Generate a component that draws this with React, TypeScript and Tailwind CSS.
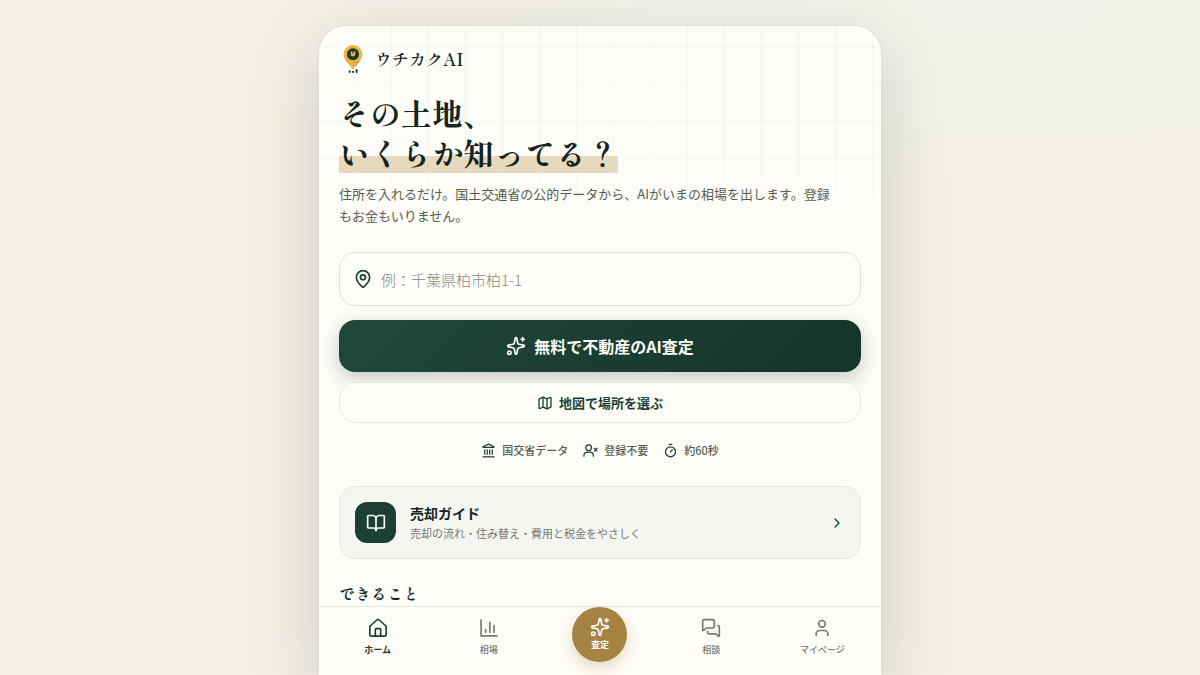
import { BookOpen, ChevronRight, Landmark, Map, MapPin, MessagesSquare, Sparkles, Timer, User } from 'lucide-react'
import type { ReactNode } from 'react'
import clsx from 'clsx'

const SERIF = "font-['Shippori_Mincho','Noto_Serif_CJK_JP','Noto_Serif_JP','Liberation_Serif','Noto_Sans_CJK_JP',serif]"

function Logo() {
  return (
    <svg viewBox="0 0 28 28" className="size-7 rounded-lg bg-white" aria-hidden="true">
      <path d="M14 24.8C12 20.8 4.6 15.6 4.6 9.2a9.4 9.2 0 0 1 18.8 0C23.4 15.6 16 20.8 14 24.8Z" fill="#efb33f" />
      <circle cx="14" cy="9.2" r="6" fill="#173b30" />
      <path d="M12.4 6.6v2.6a1.6 1.6 0 0 0 3.2 0V6.6" fill="#efb33f" stroke="#efb33f" strokeWidth="1.4" />
      <path d="M14 6v2.4" stroke="#173b30" strokeWidth="1.2" />
      <path d="M15 17.2h1M18 17.5h1M16.5 20h1" stroke="#7a6a34" />
      <path d="M10.7 25.6v2.2M14 26v1.8M17.6 24.2v3.6" stroke="#12261f" strokeWidth="1.8" />
    </svg>
  )
}

function StrokeIcon({ children }: { children: ReactNode }) {
  return (
    <svg viewBox="0 0 24 24" fill="none" stroke="currentColor" strokeWidth="2" strokeLinecap="round" strokeLinejoin="round" className="size-5" aria-hidden="true">
      {children}
    </svg>
  )
}

function UserXIcon() {
  return (
    <StrokeIcon>
      <circle cx="9" cy="7.5" r="4.5" />
      <path d="M1.5 21v-1.5a5 5 0 0 1 5-5h5a5 5 0 0 1 5 5V21M18 8.5l4.5 4.5M22.5 8.5 18 13" />
    </StrokeIcon>
  )
}

function BarsIcon() {
  return (
    <StrokeIcon>
      <path d="M2.5 2.5v19h19M8 17v-3M13 17V5.5M18 17V9" />
    </StrokeIcon>
  )
}

function HouseIcon() {
  return (
    <StrokeIcon>
      <path d="M2.2 10.8a2 2 0 0 1 .7-1.5l7.7-6.9a2 2 0 0 1 2.8 0l7.7 6.9a2 2 0 0 1 .7 1.5V20a1.8 1.8 0 0 1-1.8 1.8H4A1.8 1.8 0 0 1 2.2 20Z" />
      <path d="M8.8 21.5v-7.7a1 1 0 0 1 1-1h4.4a1 1 0 0 1 1 1v7.7" />
    </StrokeIcon>
  )
}

const TRUST = [
  { icon: <Landmark />, label: '国交省データ' },
  { icon: <UserXIcon />, label: '登録不要' },
  { icon: <Timer />, label: '約60秒' },
]

function NavItem({ label, icon, active }: { label: string; icon: ReactNode; active?: boolean }) {
  return (
    <a
      href="#"
      aria-current={active ? 'page' : undefined}
      className={clsx(
        'flex flex-col items-center gap-[3px] pt-[11px] text-[9px] leading-[18px]',
        active ? 'font-bold text-[#1c4033]' : 'font-medium text-[#75796f]',
      )}
    >
      {icon}
      {label}
    </a>
  )
}

export default function App() {
  return (
    <div className="flex h-screen justify-center overflow-hidden bg-[#f5f0e5] bg-[radial-gradient(ellipse_620px_190px_at_85%_0%,#f2f2ec_0%,#f2f2eb_60%,#f5f0e500_100%)] pt-[26px] font-['Noto_Sans_CJK_JP',sans-serif] text-[#13251e]">
      <div className="relative flex w-full max-w-[562px] flex-col overflow-hidden rounded-t-[27px] bg-[#fefdf8] shadow-[0_20px_72px_rgba(19,45,36,0.18),0_0_2px_rgba(19,45,36,0.1)]">
        {/* faint survey grid behind the hero */}
        <div className="absolute inset-x-0 top-0 h-[300px] bg-[linear-gradient(#1c403309_1px,transparent_1px),linear-gradient(90deg,#1c403309_1px,transparent_1px)] mask-[linear-gradient(black_40%,transparent)] bg-size-[37px_37px] bg-position-[35px_21px]" />

        <main className="relative min-h-0 flex-1 overflow-hidden px-5">
          <header className="flex items-center gap-2 pt-[19px]">
            <Logo />
            <span className={clsx(SERIF, 'text-[17px] leading-7 font-semibold')}>ウチカクAI</span>
          </header>

          <h1 className={clsx(SERIF, 'mt-5 text-[31px] leading-10 font-bold')}>
            <span className="block">その土地、</span>
            <span className="inline-block bg-[linear-gradient(transparent_57%,#e7d9bd_57%)]">いくらか知ってる？</span>
          </h1>
          <p className="mt-[10px] max-w-[500px] text-[13px] leading-[22px] text-[#565d55]">
            住所を入れるだけ。国土交通省の公的データから、AIがいまの相場を出します。登録もお金もいりません。
          </p>

          <label htmlFor="address" className="mt-[25px] flex h-[54px] items-center gap-2 rounded-2xl border border-[#e2e1d9] bg-[#fefdf8]/70 px-[13px]">
            <MapPin className="size-5 shrink-0 text-[#1c4033]" />
            <input
              id="address"
              type="text"
              aria-label="住所"
              placeholder="例：千葉県柏市柏1-1"
              className="h-full min-w-0 flex-1 bg-transparent text-[15px] leading-6 font-light outline-none placeholder:text-[#868981]"
            />
          </label>

          <button
            type="button"
            className="mt-[14px] flex h-[52px] w-full items-center justify-center gap-2 rounded-2xl bg-[linear-gradient(135deg,#20483a,#15342a)] text-base leading-6 font-bold text-[#fefdf8] shadow-[0_6px_18px_rgba(19,45,36,0.25)]"
          >
            <Sparkles className="size-5" />
            無料で不動産のAI査定
          </button>
          <button
            type="button"
            className="relative mt-[10px] flex h-[41px] w-full items-center justify-center gap-[6px] rounded-2xl border border-[#e8e7df] bg-[#fefdf8] text-[13px] leading-5 font-bold text-[#1c4033]"
          >
            <Map className="size-4" />
            地図で場所を選ぶ
          </button>

          <ul className="mt-[17px] flex justify-center gap-[15px] text-[11px] leading-5 font-medium text-[#565d55]">
            {TRUST.map((item) => (
              <li key={item.label} className="flex items-center gap-[6px] [&_svg]:size-[15px] [&_svg]:text-[#1c4033]">
                {item.icon}
                {item.label}
              </li>
            ))}
          </ul>

          <a href="#" className="mt-[26px] flex items-center gap-[14px] rounded-2xl border border-[#e6e8e2] bg-[#f5f5f1] p-[15px]">
            <span className="grid size-[41px] place-items-center rounded-xl bg-[#1c4033] text-[#fefdf8]">
              <BookOpen className="size-5" />
            </span>
            <span className="flex-1">
              <span className="block text-sm leading-5 font-bold">売却ガイド</span>
              <span className="block text-[11px] leading-5 text-[#75796f]">売却の流れ・住み替え・費用と税金をやさしく</span>
            </span>
            <ChevronRight className="size-4 text-[#1c4033]" />
          </a>

          <h2 className={clsx(SERIF, 'mt-[22px] text-base leading-6 font-bold')}>できること</h2>
        </main>

        <nav className="relative grid h-[69px] shrink-0 grid-cols-5 border-t border-[#e8e7e2] bg-[#fefdf8] px-[3px]">
          <NavItem label="ホーム" icon={<HouseIcon />} active />
          <NavItem label="相場" icon={<BarsIcon />} />
          <a
            href="#"
            className="mx-auto flex size-[55px] flex-col items-center justify-center rounded-full bg-[#a58342] text-[9px] leading-4 font-bold text-[#fefdf8] shadow-[0_6px_16px_rgba(165,131,66,0.3)]"
          >
            <Sparkles className="size-5" />
            査定
          </a>
          <NavItem label="相談" icon={<MessagesSquare className="size-5" />} />
          <NavItem label="マイページ" icon={<User className="size-5" />} />
        </nav>
      </div>
    </div>
  )
}
